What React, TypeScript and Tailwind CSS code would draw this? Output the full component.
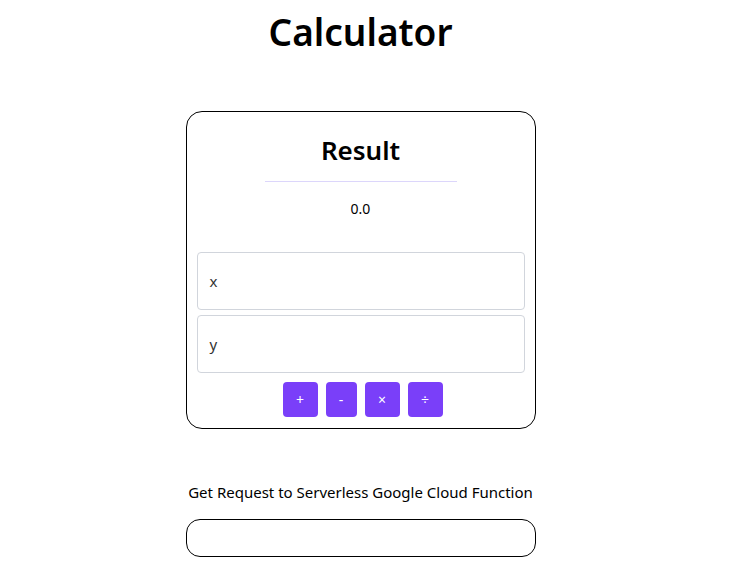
export default function App() {
  return (
    <div
      className="flex w-[721px] flex-col items-center bg-white text-black"
      style={{ fontFamily: '"Noto Sans", "Open Sans", sans-serif' }}
    >
      <h1 className="mt-[8px] text-[37px] font-semibold leading-[48px]">Calculator</h1>

      <div className="mt-[55px] flex w-[350px] flex-col items-center rounded-[16px] border border-black px-[10px] pb-[11px]">
        <h2 className="mt-[20px] text-[26px] font-semibold leading-[36px]">Result</h2>
        <div className="mt-[13px] h-px w-[192px] bg-[#dcd6fb]" />
        <p className="mt-[17px] text-[14px] leading-[20px]">0.0</p>

        <div className="mt-[33px] flex w-full flex-col gap-[5px]">
          <div className="flex h-[58px] items-center rounded-[4px] border border-gray-300 px-[12px] text-[15px] text-[#333]">
            x
          </div>
          <div className="flex h-[58px] items-center rounded-[4px] border border-gray-300 px-[12px] text-[15px] text-[#333]">
            y
          </div>
        </div>

        <div className="mt-[9px] ml-[4px] flex gap-[8px]">
          {["+", "-", "×", "÷"].map((op) => (
            <button
              key={op}
              className={
                "flex h-[35px] items-center justify-center rounded-[4px] bg-[#7a3ff9] text-[14px] text-white " +
                (op === "-" ? "w-[31px]" : "w-[35px]")
              }
            >
              {op}
            </button>
          ))}
        </div>
      </div>

      <p className="mt-[52px] text-[15px] leading-[22px]">Get Request to Serverless Google Cloud Function</p>
      <div className="mt-[16px] h-[38px] w-[350px] rounded-[14px] border border-black" />
    </div>
  );
}
